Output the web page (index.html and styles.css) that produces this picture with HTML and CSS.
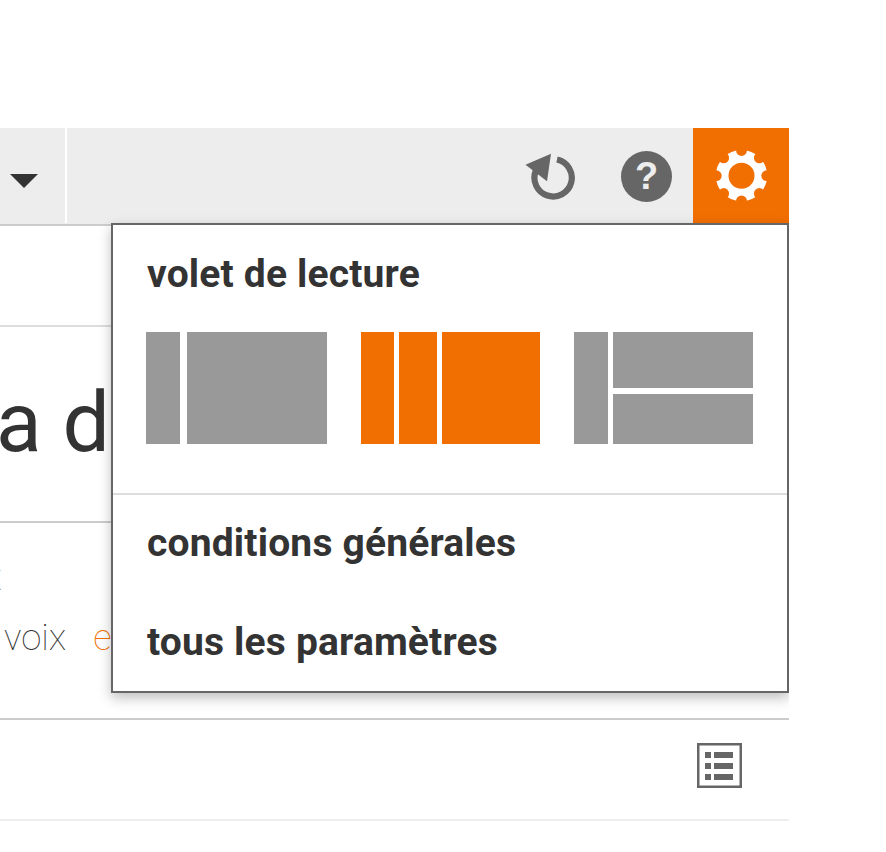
FILE: index.html
```html
<!DOCTYPE html>
<html lang="fr">
<head>
    <meta charset="UTF-8">
    <meta name="viewport" content="width=device-width, initial-scale=1.0">
    <title>Paramètres</title>
    <link rel="stylesheet" href="styles.css">
</head>
<body>
    <div class="app">
        <header class="toolbar">
            <button class="folder-toggle" aria-label="dossiers">
                <svg width="28" height="14" viewBox="0 0 28 14"><path d="M0 0h28L14 14z" fill="#333"/></svg>
            </button>
            <div class="tools">
                <button class="tool" aria-label="rafraîchir">
                    <svg width="52" height="48" viewBox="0 0 52 48">
                        <path d="M32 7.500A18.700 18.700 0 1 1 10.700 19" fill="none" stroke="#666" stroke-width="6.200"/>
                        <path d="M.5 12.700L26 1.700l-4 27.500z" fill="#666"/>
                    </svg>
                </button>
                <button class="tool help" aria-label="aide">?</button>
                <button class="tool active" aria-label="paramètres">
                    <svg width="52" height="52" viewBox="-26.5 -25.7 52 52">
                        <circle r="19.3" fill="none" stroke="#fff" stroke-width="12.6"/>
                        <g id="notches" fill="#f16e00">
                            <circle cy="-25.2" r="5.4"/>
                            <circle cy="25.2" r="5.4"/>
                            <circle cx="-25.2" r="5.4"/>
                            <circle cx="25.2" r="5.4"/>
                        </g>
                        <use href="#notches" transform="rotate(45)"/>
                    </svg>
                </button>
            </div>
        </header>

        <div class="subbar"></div>
        <h1 class="title">a d</h1>
        <div class="links">
            <div class="row cut"><span>fax</span></div>
            <div class="row"><span>voix</span><a class="edit">e</a></div>
        </div>
        <div class="list-bar">
            <svg width="45" height="45" viewBox="0 0 45 45">
                <rect x="1.25" y="1.25" width="42.5" height="42.5" fill="none" stroke="#666" stroke-width="2.5"/>
                <path d="M8 9h6v6H8zm9 0h19v6H17zM8 20h6v6H8zm9 0h19v6H17zM8 31h6v6H8zm9 0h19v6H17z" fill="#666"/>
            </svg>
        </div>

        <div class="menu">
            <section class="reading">
                <h2>volet de lecture</h2>
                <div class="layouts">
                    <div class="layout two"><i></i><i></i></div>
                    <div class="layout three selected"><i></i><i></i><i></i></div>
                    <div class="layout split"><i></i><i></i><i></i></div>
                </div>
            </section>
            <a class="item">conditions générales</a>
            <a class="item">tous les paramètres</a>
        </div>
    </div>
</body>
</html>
```

FILE: styles.css
```css
* {
    box-sizing: border-box;
}
body {
    margin: 0;
    background: #fff;
    color: #333;
    font-family: Roboto, sans-serif;
}
button {
    border: 0;
    padding: 0;
    background: none;
    font-family: inherit;
}
svg {
    display: block;
}
.app {
    position: relative;
    width: 789px;
    height: 724px;
    margin-top: 128px;
    overflow: hidden;
}
.toolbar {
    display: flex;
    justify-content: space-between;
    height: 98px;
    background: #ededed;
    border-bottom: 2px solid #ccc;
}
.folder-toggle {
    width: 67px;
    height: 95px;
    padding: 10px 0 0 10px;
    border-right: 2px solid #fff;
}
.tools {
    display: flex;
    align-items: center;
}
.tool {
    margin-right: 44px;
}
.help {
    width: 51px;
    height: 51px;
    margin-right: 21px;
    border-radius: 50%;
    background: #666;
    color: #ededed;
    font-family: "Liberation Sans", Arial, sans-serif;
    font-size: 38px;
    font-weight: 700;
    line-height: 51px;
}
.active {
    display: flex;
    align-items: center;
    justify-content: center;
    width: 96px;
    height: 96px;
    margin-right: 0;
    background: #f16e00;
}
.subbar {
    height: 101px;
    border-bottom: 2px solid #ddd;
}
.title {
    height: 196px;
    margin: 0;
    border-bottom: 2px solid #ccc;
    font-size: 84px;
    font-weight: 400;
    line-height: 192px;
    text-indent: -4px;
}
.links {
    height: 197px;
    padding-top: 25px;
    border-bottom: 2px solid #ccc;
    font-size: 36.5px;
    font-weight: 100;
    line-height: 60px;
}
.row {
    display: flex;
    gap: 27px;
    padding-left: 4px;
}
.cut {
    justify-content: flex-end;
    width: 2px;
    padding: 0;
    opacity: .6;
}
.edit {
    color: #f16e00;
}
.list-bar {
    display: flex;
    align-items: center;
    justify-content: flex-end;
    height: 101px;
    padding: 0 47px 8px 0;
    border-bottom: 2px solid #eee;
}
.menu {
    position: absolute;
    top: 95px;
    left: 111px;
    width: 678px;
    height: 470px;
    border: 2px solid #666;
    background: #fff;
    box-shadow: 0 5px 12px rgba(0, 0, 0, .25);
    font-size: 39px;
    font-weight: 700;
    letter-spacing: .17px;
}
.reading {
    height: 270px;
    padding: 25px 34px 0 33px;
    border-bottom: 2px solid #ddd;
}
h2 {
    margin: 0;
    padding-left: 1px;
    font-size: 39px;
    line-height: 48px;
}
.layouts {
    display: flex;
    justify-content: space-between;
    margin-top: 34px;
}
.layout {
    display: grid;
    height: 112px;
}
.layout i {
    background: #999;
}
.two {
    grid-template-columns: 34px 140px;
    column-gap: 7px;
}
.three {
    grid-template-columns: 33px 38px 98px;
    column-gap: 5px;
}
.split {
    grid-template: 56px 50px / 34px 140px;
    gap: 6px 5px;
}
.split i:first-child {
    grid-row: span 2;
}
.selected i {
    background: #f16e00;
}
.item {
    display: block;
    height: 99px;
    padding-left: 34px;
    line-height: 97px;
}
```
